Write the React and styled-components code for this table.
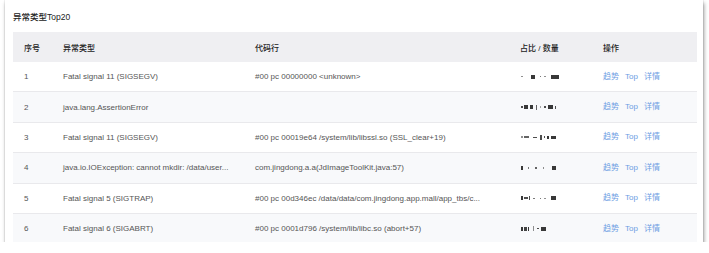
import React from "react";
import styled, { createGlobalStyle } from "styled-components";

const Global = createGlobalStyle`
  html, body { margin: 0; padding: 0; background: #fff; }
  body { font-family: "Liberation Sans", "Noto Sans CJK SC", sans-serif; }
`;

const Card = styled.section`
  margin-left: 5px;
  width: 698px;
  height: 242px;
  box-sizing: border-box;
  padding: 12px 6px 0 8px;
  background: #fff;
  overflow: hidden;
  box-shadow: 1px 3px 4px rgba(0, 0, 0, 0.4), 0 0 1px rgba(0, 0, 0, 0.3);
`;

const Title = styled.h3`
  margin: 0;
  height: 20px;
  font-size: 8.5px;
  line-height: 10px;
  font-weight: 500;
  color: #222;
`;

const cols = "39px 192px 265px 83px 1fr";

const HeaderRow = styled.div`
  display: grid;
  grid-template-columns: ${cols};
  height: 30px;
  align-items: center;
  background: #efeff2;
  font-size: 8px;
  color: #222;
  font-weight: 500;
`;

const Row = styled.div`
  display: grid;
  grid-template-columns: ${cols};
  height: 30.4px;
  box-sizing: border-box;
  align-items: center;
  border-bottom: 1px solid #e9e9ec;
  background: ${(p) => (p.$alt ? "#f8f9fb" : "#fff")};
  font-size: 8px;
  color: #555;
`;

const Cell = styled.div`
  padding-left: 11px;
  white-space: nowrap;
  overflow: hidden;
`;

const Links = styled.div`
  padding-left: 11px;
  display: flex;
  align-items: baseline;
  gap: 6px;
  color: #6d9de3;
  white-space: nowrap;
  line-height: 10px;
`;

const Masked = styled.div`
  padding-left: 12px;
  display: flex;
  align-items: center;
  height: 6px;
`;

const Blot = styled.span`
  display: inline-block;
  background: #222;
  flex: none;
`;

const rows = [
  {
    n: 1,
    type: "Fatal signal 11 (SIGSEGV)",
    code: "#00 pc 00000000 <unknown>",
    mask: [[0, 1.5, 1.5, 0.5], [8, 4, 4, 0.9], [5, 1.5, 1.5, 0.6], [3, 1.5, 1.5, 0.5], [5, 8, 4, 0.9]],
  },
  {
    n: 2,
    type: "java.lang.AssertionError",
    code: "",
    mask: [[0, 1.5, 2, 0.8], [1, 4, 4, 0.9], [2, 3, 4, 0.9], [3, 1, 5, 0.7], [3, 1.5, 1.5, 0.4], [3, 1.5, 1.5, 0.8], [2, 5, 4, 0.9], [2, 1.5, 3, 0.8]],
  },
  {
    n: 3,
    type: "Fatal signal 11 (SIGSEGV)",
    code: "#00 pc 00019e64 /system/lib/libssl.so (SSL_clear+19)",
    mask: [[0, 2, 2, 0.5], [1, 5, 2, 0.7], [4, 4, 1.5, 0.8], [3, 1.5, 5, 0.8], [2, 1.5, 2, 0.8], [2, 1.5, 3, 0.9], [2, 5, 3, 0.9]],
  },
  {
    n: 4,
    type: "java.io.IOException: cannot mkdir: /data/user...",
    code: "com.jingdong.a.a(JdImageToolKit.java:57)",
    mask: [[0, 1.5, 4, 0.9], [5, 1.5, 1.5, 0.6], [6, 1.5, 1.5, 0.7], [6, 1.5, 1.5, 0.5], [8, 4, 4, 0.9]],
  },
  {
    n: 5,
    type: "Fatal signal 5 (SIGTRAP)",
    code: "#00 pc 00d346ec /data/data/com.jingdong.app.mall/app_tbs/c...",
    mask: [[0, 1.5, 4, 0.9], [1, 4, 2, 0.8], [1, 1.5, 4, 0.8], [3, 1.5, 1.5, 0.6], [5, 1.5, 1.5, 0.6], [3, 1.5, 1.5, 0.5], [5, 5, 4, 0.9]],
  },
  {
    n: 6,
    type: "Fatal signal 6 (SIGABRT)",
    code: "#00 pc 0001d796 /system/lib/libc.so (abort+57)",
    mask: [[0, 1.5, 4, 0.9], [1, 3, 4, 0.85], [1, 1.5, 4, 0.9], [4, 1, 5, 0.5], [3, 1.5, 1.5, 0.8], [2, 5, 4, 0.9]],
  },
];

export default function App() {
  return (
    <>
      <Global />
      <Card>
        <Title>异常类型Top20</Title>
        <HeaderRow>
          <Cell>序号</Cell>
          <Cell>异常类型</Cell>
          <Cell>代码行</Cell>
          <Cell>占比 / 数量</Cell>
          <Cell>操作</Cell>
        </HeaderRow>
        {rows.map((r, i) => (
          <Row key={r.n} $alt={i % 2 === 1}>
            <Cell>{r.n}</Cell>
            <Cell>{r.type}</Cell>
            <Cell>{r.code}</Cell>
            <Masked>
              {r.mask.map(([gap, w, h, o], j) => (
                <Blot
                  key={j}
                  style={{ marginLeft: gap, width: w, height: h, opacity: o }}
                />
              ))}
            </Masked>
            <Links>
              <span>趋势</span>
              <span>Top</span>
              <span>详情</span>
            </Links>
          </Row>
        ))}
      </Card>
    </>
  );
}
